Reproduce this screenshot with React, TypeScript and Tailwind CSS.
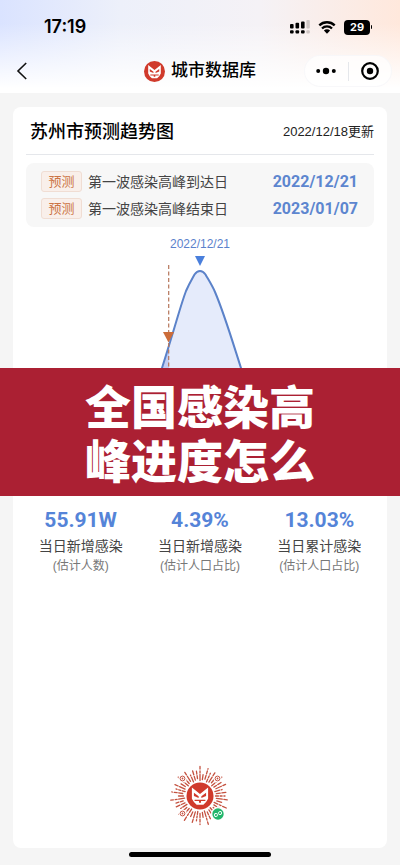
const forecasts = [
  { label: "第一波感染高峰到达日", date: "2022/12/21" },
  { label: "第一波感染高峰结束日", date: "2023/01/07" },
];

const stats = [
  { value: "55.91W", label: "当日新增感染", note: "(估计人数)" },
  { value: "4.39%", label: "当日新增感染", note: "(估计人口占比)" },
  { value: "13.03%", label: "当日累计感染", note: "(估计人口占比)" },
];

// Every ray is a long dash and a short one, lengths vary with the ray index
const rays = Array.from({ length: 44 }, (_, i) => {
  const start = 15.5 + ((i * 7) % 3);
  const end = i % 2 ? 29.5 - ((i * 5) % 3) : 25 - ((i * 5) % 4);
  return { angle: (i * 360) / 44, start, end, dash: `${3 + ((i * 3) % 4)} 1.6 ${2 + ((i * 11) % 3)} 1.8` };
});

function FoxMark() {
  return (
    <g>
      <circle cx="40" cy="40" r="40" fill="#d03a2c" />
      <path d="M16 15 40 34 64 15V48L58 58 50 66H30L22 58 16 48Z" fill="#fff" />
      <path d="M22 30 36 41V46L22 40ZM58 30 44 41V46L58 40Z" fill="#d03a2c" />
      <path d="M24 51H56V55H43V60H37V55H24Z" fill="#d03a2c" />
    </g>
  );
}

function StatusBar() {
  return (
    <div className="flex items-center justify-between pl-11 pr-7 pt-4">
      <span className="font-['Inter',sans-serif] text-[18px] leading-[22px] font-semibold">17:19</span>
      <div className="flex items-center gap-2">
        <svg width="20" height="14" viewBox="0 0 20 14" aria-hidden="true">
          {[0, 5.5, 11].map((x, i) => (
            <g key={x}>
              <rect x={x} y={4 - i * 1.3} width="3.6" height={4.5 + i * 1.3} rx="1" />
              <rect x={x} y="10.2" width="3.6" height="3.3" rx="1" />
            </g>
          ))}
          <rect x="16.4" y="0" width="3.4" height="8.5" rx="1" fill="#cfc6c4" />
          <rect x="16.4" y="10.2" width="3.4" height="3.3" rx="1" fill="#cfc6c4" />
        </svg>
        <svg width="18" height="13" viewBox="0 0 18 13" aria-hidden="true">
          <path d="M1.3 4.4a11 11 0 0 1 15.4 0M4 7.5a7 7 0 0 1 10 0" fill="none" stroke="#000" strokeWidth="2.3" />
          <path d="M5.9 9.6a4.4 4.4 0 0 1 6.2 0L9 12.8Z" />
        </svg>
        <div className="flex items-center">
          <span className="flex h-[15px] w-[26px] items-center justify-center rounded bg-black font-['Inter',sans-serif] text-[11px] font-bold text-white">
            29
          </span>
          <span className="ml-px h-1 w-px rounded-r bg-black" />
        </div>
      </div>
    </div>
  );
}

function NavBar() {
  return (
    <div className="mt-[17px] grid grid-cols-[1fr_auto_1fr] items-center px-2 pb-[6px]">
      <button type="button" aria-label="返回" className="justify-self-start px-2">
        <svg width="12" height="18" viewBox="0 0 12 18" fill="none" stroke="#111" strokeWidth="1.6">
          <path d="M10.200 1 2 9 10.200 17" />
        </svg>
      </button>
      <h1 className="flex items-center gap-[6px] text-[17px] leading-6 font-medium">
        <svg width="21" height="21" viewBox="0 0 80 80" aria-hidden="true">
          <FoxMark />
        </svg>
        城市数据库
      </h1>
      <div className="flex h-8 w-[88px] items-center justify-self-end rounded-full border border-gray-100/60 bg-white/70">
        <button type="button" aria-label="更多" className="flex flex-1 justify-center">
          <svg width="20" height="8" viewBox="0 0 20 8">
            <circle cx="2.2" cy="4" r="2" />
            <circle cx="10" cy="4" r="3.2" />
            <circle cx="17.8" cy="4" r="2" />
          </svg>
        </button>
        <span className="h-[19px] w-px bg-gray-200" />
        <button type="button" aria-label="关闭" className="flex flex-1 justify-center">
          <svg width="18" height="18" viewBox="0 0 18 18">
            <circle cx="9" cy="9" r="7.8" fill="none" stroke="#000" strokeWidth="2.2" />
            <circle cx="9" cy="9" r="3.2" />
          </svg>
        </button>
      </div>
    </div>
  );
}

function TrendChart() {
  const curve =
    "M0 238C70 236 108 200 136 114C141 98 146 82 151 65C154 55 157 45 160 37C163 30 166 25 168.500 20.500Q171 17 174 17T179.500 20.500C182 25 186 31 189 38C198 59 206 86 215 114C243 200 280 236 348 238";
  return (
    <div className="mt-[7px] flex flex-col items-center">
      <span className="text-xs leading-5 text-[#5b82cc]">2022/12/21</span>
      <svg viewBox="0 0 348 252" className="h-[252px] w-full" role="img" aria-label="预测趋势">
        <defs>
          <clipPath id="passed">
            <rect x="0" y="0" width="143" height="252" />
          </clipPath>
        </defs>
        <path d={curve} fill="#e5ebfb" />
        <path d={curve} fill="#c3cef3" clipPath="url(#passed)" />
        <path d={curve} fill="none" stroke="#5b82c9" strokeWidth="2" />
        <path d="M169 2H179L174 12Z" fill="#4a7fdc" />
        <path d="M142.700 11V238" stroke="#b5765a" strokeWidth="1.2" strokeDasharray="4 2.5" />
        <path d="M137 78H148L142.500 88.500Z" fill="#cc6c39" />
      </svg>
    </div>
  );
}

function MiniCode() {
  return (
    <svg width="64" height="64" viewBox="-32 -32 64 64" role="img" aria-label="小程序码">
      {rays.map((r) => (
        <line
          key={r.angle}
          x1={r.start}
          x2={r.end}
          y1="0"
          y2="0"
          transform={`rotate(${r.angle})`}
          stroke="#c4513f"
          strokeWidth="1.3"
          strokeLinecap="round"
          strokeDasharray={r.dash}
        />
      ))}
      {[[-17.5, -17.5], [17.5, -17.5], [-17.5, 17.5]].map(([x, y]) => (
        <g key={`${x},${y}`}>
          <circle cx={x} cy={y} r="4" fill="#fff" />
          <circle cx={x} cy={y} r="2.4" fill="#fff" stroke="#c65242" strokeWidth="1" />
          <circle cx={x} cy={y} r="0.9" fill="#c65242" />
        </g>
      ))}
      <circle r="14.500" fill="#fff" />
      <g transform="translate(-13.500 -13.500) scale(0.3375)">
        <FoxMark />
      </g>
      <circle cx="18" cy="18" r="7" fill="#fff" />
      <circle cx="18" cy="18" r="5.700" fill="#22b66b" />
      <path
        d="M16.700 18.300a1.500 1.500 0 1 0 1.300 1.500V16.200a1.500 1.500 0 1 1 1.300 1.500"
        transform="rotate(25 18 18)"
        fill="none"
        stroke="#fff"
        strokeWidth="0.9"
        strokeLinecap="round"
      />
    </svg>
  );
}

export default function App() {
  return (
    <div className="relative flex min-h-screen flex-col bg-[#f5f5f5] font-['Liberation_Sans','Noto_Sans_CJK_SC',sans-serif] text-black">
      <header className="bg-[linear-gradient(to_bottom,transparent_25%,white_95%),linear-gradient(to_right,#dae3ff,#edf0fa_30%,#f5f2f6_65%,#ffe8dc)]">
        <StatusBar />
        <NavBar />
      </header>

      <main className="flex flex-1 flex-col px-[13px] pt-[14px]">
        <section className="flex flex-1 flex-col rounded-lg bg-white">
          <div className="px-[13px]">
            <div className="flex items-center justify-between border-b border-gray-200 pt-[14px] pb-[11px] pl-1">
              <h2 className="text-[18px] leading-[22px] font-medium">苏州市预测趋势图</h2>
              <span className="text-[13px] leading-[22px] text-[#222]">2022/12/18更新</span>
            </div>

            <div className="mt-2 rounded-lg bg-[#f7f7f7] py-[5px] pl-[15px] pr-4">
              {forecasts.map((f) => (
                <div key={f.label} className="flex h-[27px] items-center">
                  <span className="flex h-[21px] w-[41px] items-center justify-center rounded-[3px] border border-[#f0ddd3] bg-[#f9efea] text-[13px] text-[#cc7445]">
                    预测
                  </span>
                  <span className="ml-[6px] text-sm text-[#444]">{f.label}</span>
                  <span className="ml-auto font-['Roboto',sans-serif] text-base font-bold text-[#5d86cf]">{f.date}</span>
                </div>
              ))}
            </div>

            <TrendChart />
          </div>

          <div className="grid grid-cols-3 px-2 text-center">
            {stats.map((s) => (
              <div key={s.value} className="flex flex-col">
                <span className="font-['Roboto',sans-serif] text-[21px] leading-7 font-bold text-[#5584d8]">{s.value}</span>
                <span className="text-sm leading-6 text-[#444]">{s.label}</span>
                <span className="text-xs leading-4 text-[#777]">{s.note}</span>
              </div>
            ))}
          </div>

          <div className="mt-auto flex justify-center pb-5">
            <MiniCode />
          </div>
        </section>
      </main>

      <footer className="flex justify-center pt-1 pb-2">
        <span className="h-[5px] w-[142px] rounded-full bg-black" />
      </footer>

      {/* Headline banner over the chart */}
      <div className="absolute inset-x-0 top-[368px] flex h-32 items-center justify-center bg-[#ab2033] pt-[6px]">
        <p className="text-[46px] leading-[54px] font-black text-white">
          全国感染高
          <br />
          峰进度怎么
        </p>
      </div>
    </div>
  );
}
